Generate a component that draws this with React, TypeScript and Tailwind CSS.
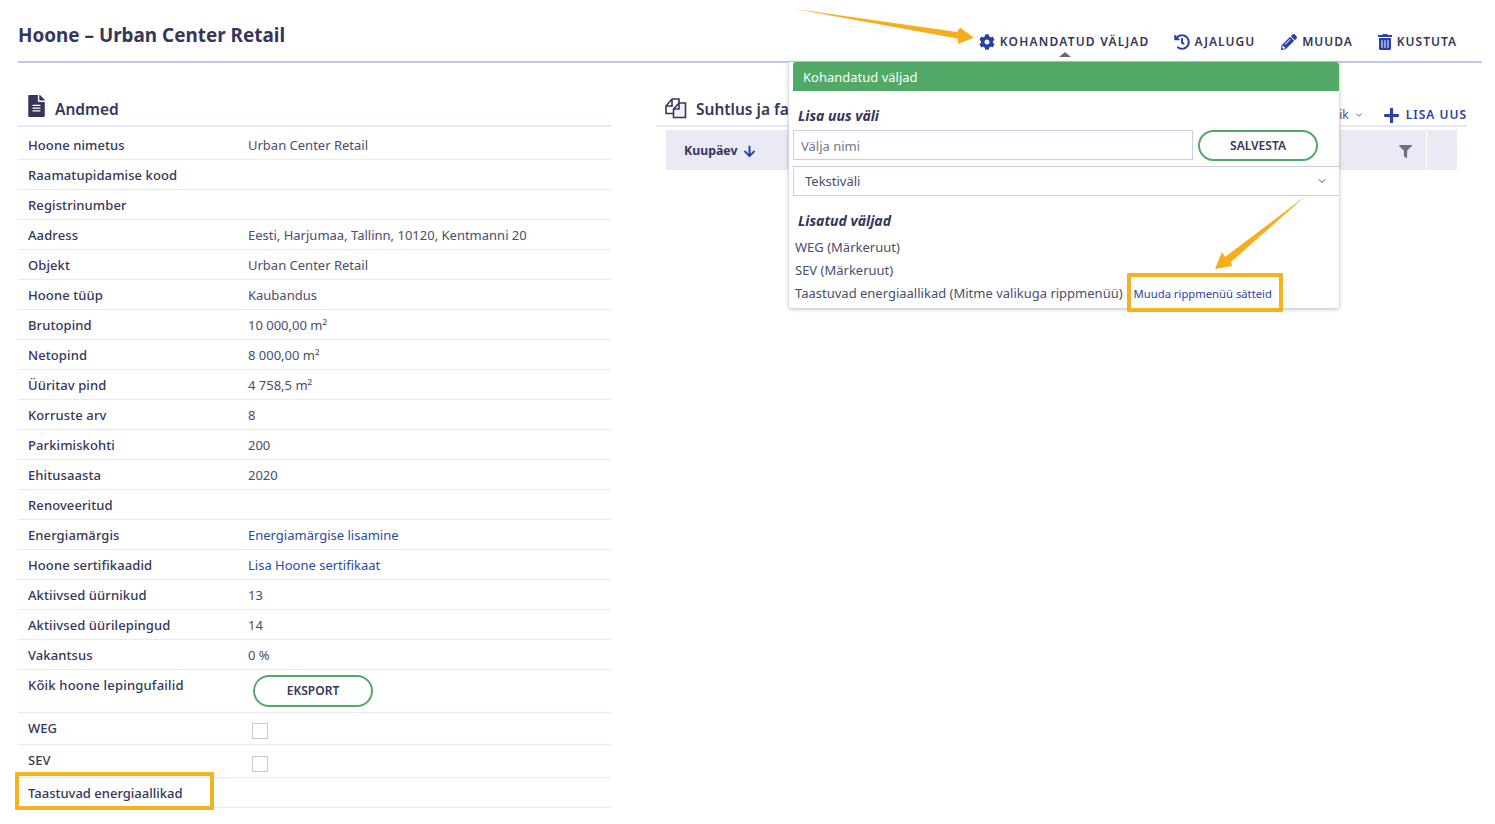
import React from 'react';
import { FaCog, FaHistory, FaPencilAlt, FaTrashAlt, FaFileAlt, FaArrowDown, FaPlus, FaFilter } from 'react-icons/fa';
import { ChevronDown } from 'lucide-react';

type Row = { label: string; value?: React.ReactNode; h?: string };

const rows: Row[] = [
  { label: 'Hoone nimetus', value: 'Urban Center Retail', h: 'h-[33px] pt-[6px]' },
  { label: 'Raamatupidamise kood' },
  { label: 'Registrinumber' },
  { label: 'Aadress', value: 'Eesti, Harjumaa, Tallinn, 10120, Kentmanni 20' },
  { label: 'Objekt', value: 'Urban Center Retail' },
  { label: 'Hoone tüüp', value: 'Kaubandus' },
  { label: 'Brutopind', value: '10 000,00 m²' },
  { label: 'Netopind', value: '8 000,00 m²' },
  { label: 'Üüritav pind', value: '4 758,5 m²' },
  { label: 'Korruste arv', value: '8' },
  { label: 'Parkimiskohti', value: '200' },
  { label: 'Ehitusaasta', value: '2020' },
  { label: 'Renoveeritud' },
  { label: 'Energiamärgis', value: <span className="text-[#2b4aa6]">Energiamärgise lisamine</span> },
  { label: 'Hoone sertifikaadid', value: <span className="text-[#2b4aa6]">Lisa Hoone sertifikaat</span> },
  { label: 'Aktiivsed üürnikud', value: '13' },
  { label: 'Aktiivsed üürilepingud', value: '14' },
  { label: 'Vakantsus', value: '0 %' },
];

const Checkbox = () => <span className="block w-[16px] h-[16px] border border-[#c8c8c8] bg-white" />;

const actions = [
  { icon: <FaCog size={16} />, text: 'KOHANDATUD VÄLJAD', w: 'gap-[5px] tracking-[1.2px]' },
  { icon: <FaHistory size={16} />, text: 'AJALUGU', w: 'gap-[5px] ml-[24px]' },
  { icon: <FaPencilAlt size={16} />, text: 'MUUDA', w: 'gap-[5px] ml-[26px]' },
  { icon: <FaTrashAlt size={16} />, text: 'KUSTUTA', w: 'gap-[4px] ml-[24px]' },
];

const FilesIcon = () => (
  <svg width="22" height="21" viewBox="0 0 22 21" fill="none" stroke="#34365a" strokeWidth="1.6" className="-mt-[4px]">
    <path d="M7 1 L1 8 V15.5 H8" />
    <path d="M7 1 H14 V5" />
    <path d="M7 1 V8 H1" />
    <path d="M14 5 H20.5 V19.5 H8.5 V11 Z" fill="#f1f1f5" />
    <path d="M14 5 V11 H8.5" />
  </svg>
);

const CustomFieldsPopover = () => (
  <div className="absolute left-[789px] top-[62px] w-[550px] h-[246px] z-10 bg-white pl-[4px] shadow-[0_1px_4px_rgba(0,0,0,0.3)] rounded-b-[3px]">
    <div className="h-[29px] bg-[#52a866] text-white text-[13px] leading-[30px] pl-[10px] rounded-t-[3px]">Kohandatud väljad</div>
    <div className="mt-[16px] pl-[5px] text-[14px] leading-[18px] font-bold italic text-[#34365a]">Lisa uus väli</div>
    <div className="flex mt-[5px] gap-[5px]">
      <div className="w-[400px] h-[30px] border border-[#c9cdea] text-[13px] leading-[30px] pl-[7px] text-[#75778c]">Välja nimi</div>
      <div className="w-[120px] h-[31px] border-2 border-[#52a866] rounded-full text-[12px] leading-[27px] font-semibold text-center text-[#34365a]">SALVESTA</div>
    </div>
    <div className="flex items-center justify-between h-[30px] mt-[5px] pt-[2px] border border-r-0 border-[#c9cdea] text-[13px] pl-[11px] pr-[11px] text-[#4a4d6c]">
      Tekstiväli
      <ChevronDown size={12} className="-mt-[3px]" />
    </div>
    <div className="mt-[16px] pl-[5px] text-[14px] leading-[18px] font-bold italic text-[#34365a]">Lisatud väljad</div>
    <div className="mt-[6px] pl-[2px] text-[13px] leading-[23px] text-[#4a4d6c]">
      <div>WEG (Märkeruut)</div>
      <div>SEV (Märkeruut)</div>
      <div className="flex items-center">
        Taastuvad energiaallikad (Mitme valikuga rippmenüü)
        <span className="ml-[11px] text-[11.25px] text-[#2b3fa8]">Muuda rippmenüü sätteid</span>
      </div>
    </div>
  </div>
);

const Annotations = () => (
  <>
    <svg className="absolute left-0 top-0 z-20 pointer-events-none" width="1495" height="824">
      <polygon points="792,8.5 957,32 960,27.5 974,37.7 958,44 957.5,38.5" fill="#f6ae1e" />
      <polygon points="1305.5,196 1231,262 1232,266 1215,269 1222,252 1225,257" fill="#f6ae1e" />
    </svg>
    <div className="absolute left-[15px] top-[772px] w-[199px] h-[38px] border-4 border-[#f5b120] z-20 rounded-[1px]" />
    <div className="absolute left-[1127px] top-[273px] w-[156px] h-[39px] border-4 border-[#f5b120] z-20 rounded-[1px]" />
  </>
);

export default function App() {
  return (
    <div className="relative w-[1495px] h-[824px] overflow-hidden bg-white font-['Noto_Sans',sans-serif] text-[#34365a] text-[13px]">
      <Annotations />
      <div className="relative px-[13px]">
        <div className="flex items-start justify-between h-[63px] border-b-2 border-[#c0c6e8] ml-[5px]">
          <h1 className="text-[18.9px] font-bold leading-[28px] mt-[21px] text-[#34365a]">Hoone – Urban Center Retail</h1>
          <div className="relative flex items-center mt-[33px] pr-[25px] text-[12px] font-semibold tracking-[1px] leading-[18px]">
            {actions.map(a => (
              <div key={a.text} className={`flex items-center ${a.w}`}>
                <span className="text-[#2b3fa8]">{a.icon}</span>
                {a.text}
              </div>
            ))}
            <span className="absolute left-[80px] top-[19px] w-0 h-0 border-x-[6px] border-x-transparent border-b-[5px] border-b-[#6b6b6b]" />
          </div>
        </div>
        <CustomFieldsPopover />
      </div>
      <div className="flex mt-[32px] ml-[18px]">
        <div className="w-[593px] shrink-0">
          <div className="flex items-center h-[32px] border-b-2 border-[#e6e8f4] pl-[10px]">
            <FaFileAlt className="text-[#34365a] -mt-[8px] w-[17px] h-[22px]" />
            <span className="ml-[10px] text-[15.5px] font-semibold -mt-[1px]">Andmed</span>
          </div>
          {rows.map(r => (
            <div key={r.label} className={`flex items-center border-b border-[#e6e8f4] pl-[10px] ${r.h ?? 'h-[30px] pt-[2px]'}`}>
              <div className="w-[220px] font-medium tracking-[0.1px]">{r.label}</div>
              <div className="text-[#4a4d6c]">{r.value}</div>
            </div>
          ))}
          <div className="flex items-start h-[43px] border-b border-[#e6e8f4] pl-[10px] pt-[5px]">
            <div className="w-[225px] font-medium tracking-[0.2px] mt-[1px]">Kõik hoone lepingufailid</div>
            <div className="w-[120px] h-[32px] border-2 border-[#52a866] rounded-full text-[12px] leading-[28px] font-semibold text-center">EKSPORT</div>
          </div>
          <div className="flex items-start h-[32px] border-b border-[#e6e8f4] pl-[10px] pt-[6px]">
            <div className="w-[224px] font-medium">WEG</div>
            <div className="mt-[4px]"><Checkbox /></div>
          </div>
          <div className="flex items-start h-[33px] border-b border-[#e6e8f4] pl-[10px] pt-[6px]">
            <div className="w-[224px] font-medium">SEV</div>
            <div className="mt-[5px]"><Checkbox /></div>
          </div>
          <div className="flex items-center h-[30px] pt-[2px] border-b border-[#e6e8f4] pl-[10px] font-medium">Taastuvad energiaallikad</div>
        </div>
        <div className="ml-[45px] w-[811px] shrink-0">
          <div className="flex items-center justify-between h-[32px] border-b-2 border-[#e6e8f4] pl-[9px]">
            <div className="flex items-center">
              <FilesIcon />
              <span className="ml-[9px] text-[15.5px] font-semibold -mt-[1px]">Suhtlus ja failid</span>
            </div>
            <div className="flex items-center mt-[10px]">
              <span className="flex items-center gap-[5px] text-[#4a4d8c] text-[12px] mr-[19px]">Kõik <ChevronDown size={10} /></span>
              <FaPlus size={17} className="text-[#2b3fa8]" />
              <span className="ml-[6px] text-[12px] font-semibold tracking-[1px] text-[#2b3fa8]">LISA UUS</span>
            </div>
          </div>
          <div className="flex gap-[1px] mt-[3px] ml-[10px] h-[40px]">
            <div className="flex items-center justify-between w-[760px] bg-[#e9eaf3] pl-[18px] pr-[14px]">
              <span className="flex items-center gap-[6px] text-[12.3px] font-bold mt-[2px]">Kuupäev <FaArrowDown size={13} className="text-[#2b3fa8] mt-[1px]" /></span>
              <FaFilter size={13} className="text-[#6e6e85] mt-[3px]" />
            </div>
            <div className="w-[30px] bg-[#e9eaf3]" />
          </div>
        </div>
      </div>
    </div>
  );
}
